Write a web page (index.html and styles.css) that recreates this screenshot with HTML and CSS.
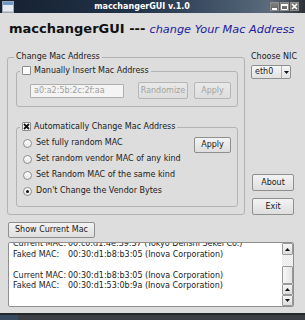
FILE: index.html
```html
<!DOCTYPE html>
<html lang="en">
<head>
    <meta charset="UTF-8">
    <meta name="viewport" content="width=device-width, initial-scale=1.0">
    <title>macchangerGUI v.1.0</title>
    <link rel="stylesheet" href="styles.css">
</head>
<body>

<div class="window">

    <div class="titlebar">
        <svg class="app-icon" width="12" height="12" viewBox="0 0 12 12">
            <rect x="0.5" y="0.5" width="11" height="11" fill="#e6ebf1" stroke="#9fa9b6"/>
            <rect x="1" y="1" width="10" height="3" fill="#6f97c9"/>
            <rect x="1" y="10" width="10" height="1" fill="#c3cad3"/>
        </svg>
        <span class="title">macchangerGUI v.1.0</span>
        <div class="win-buttons">
            <span class="win-btn">
                <svg width="7" height="7" viewBox="0 0 7 7"><rect x="1" y="5" width="5" height="2" fill="#fff"/></svg>
            </span>
            <span class="win-btn">
                <svg width="7" height="7" viewBox="0 0 7 7"><path d="M0.5 1.5h6v5h-6z" fill="none" stroke="#fff"/><rect x="0" y="1" width="7" height="2" fill="#fff"/></svg>
            </span>
            <span class="win-btn">
                <svg width="7" height="7" viewBox="0 0 7 7"><path d="M1 1l5 5M6 1l-5 5" stroke="#fff" stroke-width="1.6"/></svg>
            </span>
        </div>
    </div>

    <div class="client">
        <h1 class="heading"><b>macchangerGUI ---</b> <i>change Your Mac Address</i></h1>

        <div class="main">
            <fieldset class="group outer">
                <legend>Change Mac Address</legend>

                <fieldset class="group manual">
                    <legend><span class="check"></span>Manually Insert Mac Address</legend>
                    <div class="manual-row">
                        <span class="mac-field">a0:a2:5b:2c:2f:aa</span>
                        <button class="btn disabled randomize">Randomize</button>
                        <button class="btn disabled apply">Apply</button>
                    </div>
                </fieldset>

                <fieldset class="group auto">
                    <legend><span class="check"><svg width="7" height="7" viewBox="0 0 7 7"><path d="M1 1l5 5M6 1l-5 5" stroke="#111" stroke-width="1.8"/></svg></span>Automatically Change Mac Address</legend>
                    <div class="auto-body">
                        <ul class="radios">
                            <li><span class="radio"></span>Set fully random MAC</li>
                            <li><span class="radio"></span>Set random vendor MAC of any kind</li>
                            <li><span class="radio"></span>Set Random MAC of the same kind</li>
                            <li><span class="radio checked"></span>Don't Change the Vendor Bytes</li>
                        </ul>
                        <button class="btn apply">Apply</button>
                    </div>
                </fieldset>
            </fieldset>

            <div class="side">
                <div class="nic-label">Choose NIC</div>
                <div class="combo">
                    <span class="combo-text">eth0</span>
                    <span class="combo-arrow"><svg width="5" height="3" viewBox="0 0 5 3"><path d="M0 0h5L2.5 3z" fill="#111"/></svg></span>
                </div>
                <div class="side-spacer"></div>
                <button class="btn side-btn">About</button>
                <button class="btn side-btn exit">Exit</button>
            </div>
        </div>

        <button class="btn show-mac">Show Current Mac</button>

        <div class="log">
            <div class="log-text">
                <div><span class="log-key">Current MAC:</span>00:c0:d1:4e:39:37 (Tokyo Denshi Sekei Co.)</div>
                <div><span class="log-key">Faked MAC:</span>00:30:d1:b8:b3:05 (Inova Corporation)</div>
                <div>&nbsp;</div>
                <div><span class="log-key">Current MAC:</span>00:30:d1:b8:b3:05 (Inova Corporation)</div>
                <div><span class="log-key">Faked MAC:</span>00:30:d1:53:0b:9a (Inova Corporation)</div>
            </div>
            <div class="scrollbar">
                <span class="sb-btn top"><svg width="5" height="3" viewBox="0 0 5 3"><path d="M0 3h5L2.5 0z" fill="#111"/></svg></span>
                <span class="sb-track"></span>
                <span class="sb-thumb"></span>
                <span class="sb-btn"><svg width="5" height="3" viewBox="0 0 5 3"><path d="M0 3h5L2.5 0z" fill="#111"/></svg></span>
                <span class="sb-btn"><svg width="5" height="3" viewBox="0 0 5 3"><path d="M0 0h5L2.5 3z" fill="#111"/></svg></span>
            </div>
        </div>
    </div>

    <div class="taskbar"><span class="task-start"></span></div>

</div>

</body>
</html>
```

FILE: styles.css
```css
:root {
    --bg: #dddddd;
    --frame: #b3b3b3;
    --btn-border: #8f8f8f;
    --text: #1a1a1a;
    --muted: #a2a2a2;
    --blue: #1c1ca0;
}

* {
    box-sizing: border-box;
    margin: 0;
    padding: 0;
}

body {
    width: 305px;
    height: 320px;
    overflow: hidden;
    background: var(--bg);
    font-family: "DejaVu Sans", sans-serif;
    font-size: 8px;
    line-height: 10px;
    color: var(--text);
}

.window {
    display: flex;
    flex-direction: column;
    height: 320px;
}

/* title bar */
.titlebar {
    height: 14px;
    display: flex;
    align-items: center;
    padding: 0 6px 0 2px;
    background: linear-gradient(90deg, #162131 0%, #22334a 45%, #4a5c70 78%, #5b6b7c 88%, #353b42 98%, #2c3036 100%);
}

.app-icon {
    display: block;
}

.title {
    flex: 1;
    text-align: center;
    color: #fff;
    font-weight: bold;
    font-size: 8px;
}

.win-buttons {
    display: flex;
    gap: 1px;
}

.win-btn {
    width: 9px;
    height: 9px;
    display: flex;
    align-items: center;
    justify-content: center;
    background: linear-gradient(#808080, #626262);
    border: 1px solid #8d8d8d;
}

.win-btn svg {
    display: block;
}

/* client area */
.client {
    flex: 1;
    display: flex;
    flex-direction: column;
    padding: 0 11px 6px 7px;
}

.heading {
    margin-top: 8px;
    padding-left: 2px;
    font-size: 13px;
    line-height: 15px;
    font-weight: normal;
    white-space: nowrap;
}

.heading b {
    font-weight: bold;
    color: #111;
}

.heading i {
    font-size: 11.3px;
    color: var(--blue);
}

.main {
    display: flex;
    gap: 6px;
    margin-top: 15px;
}

/* group boxes */
.group {
    border: 1px solid var(--frame);
    border-radius: 3px;
    min-inline-size: 0;
}

.group > legend {
    padding: 0 2px;
    line-height: 10px;
    white-space: nowrap;
}

.outer {
    width: 238px;
    padding: 4px 6px 7px 8px;
}

.outer > legend {
    margin-left: -2px;
}

.manual {
    padding: 6px 6px 7px 13px;
}

.manual > legend {
    margin-left: -10px;
}

.auto {
    margin-top: 15px;
    padding: 3px 6px 7px 6px;
}

.auto > legend {
    margin-left: -3px;
}

.check {
    display: inline-flex;
    align-items: center;
    justify-content: center;
    vertical-align: top;
    width: 9px;
    height: 9px;
    margin-right: 3px;
    background: #fbfbfb;
    border: 1px solid #8c8c8c;
    border-radius: 1px;
}

.check svg {
    display: block;
}

.manual-row {
    display: flex;
    align-items: center;
}

.mac-field {
    width: 94px;
    height: 14px;
    padding-left: 3px;
    line-height: 12px;
    background: #f4f4f4;
    border: 1px solid #aeaeae;
    border-radius: 1px;
    color: #9c9c9c;
}

/* buttons */
.btn {
    font-family: inherit;
    font-size: 8px;
    line-height: 10px;
    color: var(--text);
    height: 17px;
    background: linear-gradient(#f3f3f3, #dedede);
    border: 1px solid var(--btn-border);
    border-radius: 2px;
    text-align: center;
}

.btn.disabled {
    color: var(--muted);
    border-color: #b6b6b6;
    background: linear-gradient(#e9e9e9, #dddddd);
}

.randomize {
    width: 50px;
    margin-left: 14px;
}

.apply {
    width: 37px;
    margin-left: 6px;
}

.auto-body {
    display: flex;
    justify-content: space-between;
    align-items: flex-start;
}

.auto-body .apply {
    height: 16px;
    margin-top: 2px;
}

.radios {
    list-style: none;
}

.radios li {
    height: 16px;
    display: flex;
    align-items: center;
    white-space: nowrap;
}

.radio {
    width: 9px;
    height: 9px;
    margin-right: 4px;
    border-radius: 50%;
    border: 1px solid #8f8f8f;
    background: linear-gradient(#fdfdfd, #e6e6e6);
    display: flex;
    align-items: center;
    justify-content: center;
}

.radio.checked::after {
    content: "";
    width: 3px;
    height: 3px;
    border-radius: 50%;
    background: #111;
}

/* right column */
.side {
    width: 43px;
    display: flex;
    flex-direction: column;
    align-items: flex-start;
}

.nic-label {
    white-space: nowrap;
}

.combo {
    margin-top: 3px;
    width: 40px;
    height: 14px;
    display: flex;
    background: linear-gradient(#f6f6f6, #e2e2e2);
    border: 1px solid var(--btn-border);
    border-radius: 2px;
}

.combo-text {
    flex: 1;
    padding-left: 3px;
    line-height: 12px;
}

.combo-arrow {
    width: 9px;
    border-left: 1px solid #b0b0b0;
    display: flex;
    align-items: center;
    justify-content: center;
}

.side-spacer {
    flex: 1;
}

.side-btn {
    width: 42px;
    margin-left: 1px;
}

.exit {
    margin-top: 7px;
}

.show-mac {
    margin-top: 7px;
    margin-left: 1px;
    width: 87px;
    height: 16px;
}

/* log view */
.log {
    margin-top: 4px;
    margin-left: 1px;
    height: 65px;
    display: flex;
    background: #fff;
    border: 1px solid var(--btn-border);
    border-radius: 2px;
    overflow: hidden;
}

.log-text {
    flex: 1;
    margin-top: -4px;
    padding-left: 4px;
    line-height: 10.5px;
    white-space: nowrap;
    overflow: hidden;
}

.log-key {
    display: inline-block;
    width: 55px;
}

.scrollbar {
    width: 11px;
    display: flex;
    flex-direction: column;
}

.sb-btn {
    height: 11px;
    display: flex;
    align-items: center;
    justify-content: center;
    background: linear-gradient(#f6f6f6, #dcdcdc);
    border: 1px solid #999;
    border-radius: 1px;
}

.sb-btn.top {
    height: 12px;
}

.sb-track {
    flex: 1;
    background: repeating-conic-gradient(#e6e6e6 0 25%, #f8f8f8 0 50%) 0 0 / 2px 2px;
}

.sb-thumb {
    height: 18px;
    background: linear-gradient(90deg, #f7f7f7, #e4e4e4);
    border: 1px solid #999;
    border-radius: 1px;
}

/* desktop panel below the window */
.taskbar {
    height: 7px;
    display: flex;
    background: #3b3f44;
    border-top: 2px solid #25282b;
}

.task-start {
    width: 18px;
    background: #364b60;
}
```
